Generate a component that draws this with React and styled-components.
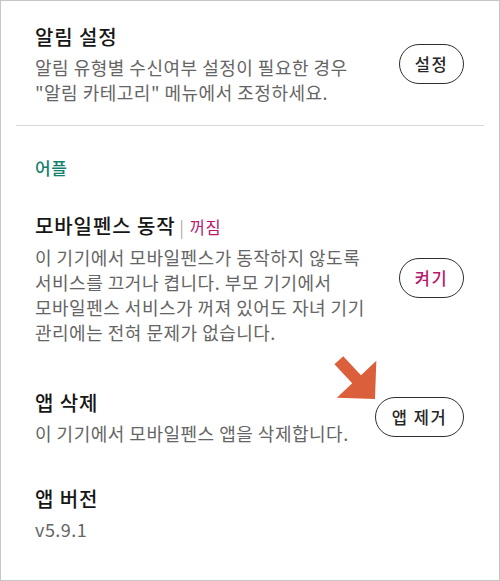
import React from "react";
import styled, { createGlobalStyle } from "styled-components";

const GlobalStyle = createGlobalStyle`
  html, body {
    margin: 0;
    padding: 0;
    background: #ffffff;
  }
  body {
    font-family: "Noto Sans CJK KR", "Noto Sans", sans-serif;
  }
`;

const Page = styled.div`
  width: 500px;
  height: 581px;
  box-sizing: border-box;
  border: 1px solid #c6c6c6;
  background: #fff;
  display: flex;
  flex-direction: column;
`;

const Row = styled.div`
  display: flex;
  align-items: center;
  justify-content: space-between;
  padding: ${(p) => p.$top}px 35px ${(p) => p.$bottom || 0}px 34px;
`;

const TextBlock = styled.div`
  display: flex;
  flex-direction: column;
`;

const Title = styled.div`
  font-size: 20px;
  line-height: 30px;
  font-weight: 500;
  letter-spacing: 0.9px;
  color: #161616;
  margin-bottom: 3px;
  white-space: nowrap;
`;

const Pipe = styled.span`
  font-size: 17px;
  font-weight: 300;
  color: #8a8a8a;
  margin: 0 5px 0 4px;
`;

const State = styled.span`
  font-size: 16.5px;
  font-weight: 400;
  letter-spacing: 0.5px;
  color: #b8186d;
`;

const Desc = styled.div`
  font-size: 18px;
  line-height: 25px;
  letter-spacing: 0.5px;
  color: #656565;
  white-space: nowrap;
`;

const Divider = styled.div`
  height: 1px;
  margin: 0 15px;
  background: #d9d9d9;
`;

const Header = styled.div`
  padding: 31px 34px 0;
  font-size: 17px;
  line-height: 22px;
  letter-spacing: 0.5px;
  font-weight: 500;
  color: #12806e;
`;

const ButtonWrap = styled.div`
  position: relative;
  flex-shrink: 0;
`;

const PillButton = styled.button`
  box-sizing: border-box;
  width: ${(p) => p.$w}px;
  height: 40px;
  border: 1.5px solid #2e2e2e;
  border-radius: 20px;
  background: #fff;
  font-family: inherit;
  font-size: 16.5px;
  font-weight: 500;
  letter-spacing: 1.5px;
  color: ${(p) => p.$color || "#262626"};
  padding: 0;
`;

const Arrow = styled.svg`
  position: absolute;
  left: -44px;
  top: -45px;
  width: 50px;
  height: 50px;
  overflow: visible;
`;

export default function App() {
  return (
    <>
      <GlobalStyle />
      <Page>
        <Row $top={21} $bottom={20}>
          <TextBlock>
            <Title>알림 설정</Title>
            <Desc>
              알림 유형별 수신여부 설정이 필요한 경우
              <br />
              "알림 카테고리" 메뉴에서 조정하세요.
            </Desc>
          </TextBlock>
          <PillButton $w={65}>설정</PillButton>
        </Row>

        <Divider />

        <Header>어플</Header>

        <Row $top={32}>
          <TextBlock>
            <Title>
              모바일펜스 동작<Pipe>|</Pipe>
              <State>꺼짐</State>
            </Title>
            <Desc>
              이 기기에서 모바일펜스가 동작하지 않도록
              <br />
              서비스를 끄거나 켭니다. 부모 기기에서
              <br />
              모바일펜스 서비스가 꺼져 있어도 자녀 기기
              <br />
              관리에는 전혀 문제가 없습니다.
            </Desc>
          </TextBlock>
          <PillButton $w={65} $color="#b8186d">
            켜기
          </PillButton>
        </Row>

        <Row $top={43}>
          <TextBlock>
            <Title>앱 삭제</Title>
            <Desc>이 기기에서 모바일펜스 앱을 삭제합니다.</Desc>
          </TextBlock>
          <ButtonWrap>
            <Arrow viewBox="0 0 50 50">
              <polygon
                transform="translate(44 47) rotate(47)"
                points="0,0 -27,-27 -27,-6 -53,-6 -53,6 -27,6 -27,27"
                fill="#dc5f3b"
              />
            </Arrow>
            <PillButton $w={89}>앱 제거</PillButton>
          </ButtonWrap>
        </Row>

        <Row $top={38}>
          <TextBlock>
            <Title>앱 버전</Title>
            <Desc>v5.9.1</Desc>
          </TextBlock>
        </Row>
      </Page>
    </>
  );
}
